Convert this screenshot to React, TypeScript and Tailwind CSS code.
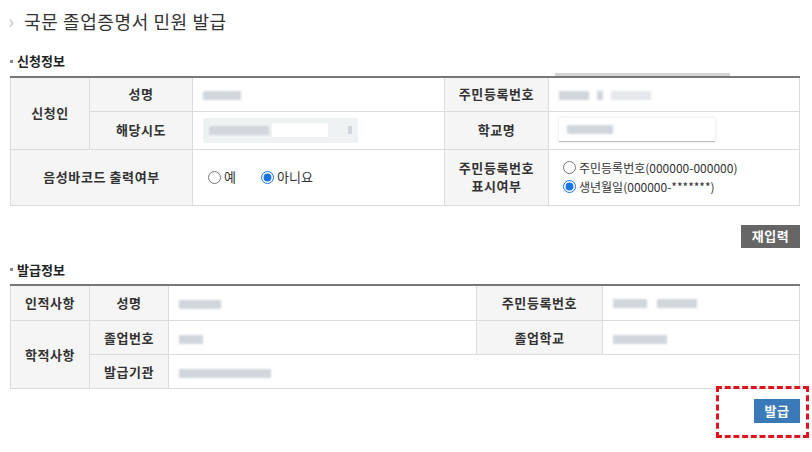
import React from "react";

const font = { fontFamily: '"Noto Sans CJK KR", "Noto Sans", sans-serif' };

function Blur({ w, tone = "bg-gray-300" }: { w: number; tone?: string }) {
  return <span className={`inline-block h-[9px] ${tone} blur-[1.2px] align-middle`} style={{ width: w }} />;
}

function Th({ children, className = "", ...rest }: React.ThHTMLAttributes<HTMLTableCellElement>) {
  return (
    <th
      {...rest}
      className={`border border-[#dcdcdc] bg-[#f5f5f5] p-0 text-center text-[13px] font-bold leading-[18px] tracking-[0.6px] text-[#333] ${className}`}
    >
      {children}
    </th>
  );
}

function Td({ children, className = "", ...rest }: React.TdHTMLAttributes<HTMLTableCellElement>) {
  return (
    <td {...rest} className={`border border-[#dcdcdc] bg-white px-[10px] py-0 text-[13px] text-[#333] ${className}`}>
      {children}
    </td>
  );
}

function Radio({ checked, name, label }: { checked?: boolean; name: string; label: string }) {
  return (
    <label className="inline-flex items-center gap-[3px] text-[#333]">
      <input type="radio" name={name} defaultChecked={checked} className="m-0 h-[13px] w-[13px] accent-[#1a73e8]" />
      <span>{label}</span>
    </label>
  );
}

function SectionLabel({ children }: { children: React.ReactNode }) {
  return (
    <div className="flex h-[16px] items-center gap-[4px] pl-[10px] text-[13px] font-bold text-[#222]">
      <span className="h-[3px] w-[3px] bg-[#888]" />
      <span>{children}</span>
    </div>
  );
}

export default function App() {
  return (
    <div className="h-[452px] w-[812px] bg-white" style={font}>
      {/* Title */}
      <div className="flex h-[42px] items-center pl-[8px]">
        <span className="text-[20px] leading-none text-[#c8c8c8]">›</span>
        <span className="ml-[10px] text-[18px] tracking-[0.6px] text-[#333]">국문 졸업증명서 민원 발급</span>
      </div>

      {/* 신청정보 */}
      <div className="mt-[11px]">
        <SectionLabel>신청정보</SectionLabel>
      </div>
      <div className="relative mt-[7px] px-[10px]">
        <div className="absolute left-[555px] top-[-3px] h-[3px] w-[175px] bg-[#d4d4d4] blur-[0.5px]" />
        <table className="w-[789px] table-fixed border-collapse border-t-2 border-t-[#777]">
          <colgroup>
            <col className="w-[79px]" />
            <col className="w-[103px]" />
            <col className="w-[252px]" />
            <col className="w-[104px]" />
            <col className="w-[251px]" />
          </colgroup>
          <tbody>
            <tr className="h-[34px]">
              <Th rowSpan={2}>신청인</Th>
              <Th>성명</Th>
              <Td>
                <Blur w={38} />
              </Td>
              <Th>주민등록번호</Th>
              <Td>
                <span className="inline-flex items-center gap-[8px]">
                  <Blur w={30} />
                  <Blur w={6} />
                  <Blur w={40} tone="bg-gray-200" />
                </span>
              </Td>
            </tr>
            <tr className="h-[38px]">
              <Th>해당시도</Th>
              <Td className="px-[6px]">
                <div className="flex h-[25px] w-[155px] items-center justify-between rounded-[2px] bg-[#eef2f3] px-[6px] blur-[0.6px]">
                  <span className="inline-flex items-center gap-[3px]">
                    <Blur w={60} tone="bg-gray-300" />
                    <span className="h-[14px] w-[56px] bg-white" />
                  </span>
                  <span className="h-[8px] w-[4px] bg-gray-300" />
                </div>
              </Td>
              <Th>학교명</Th>
              <Td className="px-[8px]">
                <div className="flex h-[24px] w-[156px] items-center border-b border-[#bbb] bg-white px-[8px] shadow-[0_0_3px_rgba(0,0,0,0.12)]">
                  <Blur w={46} />
                </div>
              </Td>
            </tr>
            <tr className="h-[56px]">
              <Th colSpan={2}>음성바코드 출력여부</Th>
              <Td className="px-[15px]">
                <div className="flex items-center gap-[25px]">
                  <Radio name="voice" label="예" />
                  <Radio name="voice" label="아니요" checked />
                </div>
              </Td>
              <Th>
                주민등록번호
                <br />
                표시여부
              </Th>
              <Td className="px-[14px]">
                <div className="flex flex-col gap-[2px] text-[12px] leading-[17px]">
                  <Radio name="rrn" label="주민등록번호(000000-000000)" />
                  <Radio name="rrn" label="생년월일(000000-*******)" checked />
                </div>
              </Td>
            </tr>
          </tbody>
        </table>
      </div>

      <div className="mt-[19px] flex justify-end pr-[12px]">
        <button className="h-[23px] w-[59px] bg-[#666] text-[13px] font-bold tracking-[0.5px] text-white">재입력</button>
      </div>

      {/* 발급정보 */}
      <div className="mt-[14px]">
        <SectionLabel>발급정보</SectionLabel>
      </div>
      <div className="mt-[6px] px-[10px]">
        <table className="w-[789px] table-fixed border-collapse border-t-2 border-t-[#777]">
          <colgroup>
            <col className="w-[79px]" />
            <col className="w-[79px]" />
            <col className="w-[308px]" />
            <col className="w-[126px]" />
            <col className="w-[197px]" />
          </colgroup>
          <tbody>
            <tr className="h-[36px]">
              <Th>인적사항</Th>
              <Th>성명</Th>
              <Td>
                <Blur w={42} />
              </Td>
              <Th>주민등록번호</Th>
              <Td>
                <span className="inline-flex items-center gap-[10px]">
                  <Blur w={34} />
                  <Blur w={40} />
                </span>
              </Td>
            </tr>
            <tr className="h-[34px]">
              <Th rowSpan={2}>학적사항</Th>
              <Th>졸업번호</Th>
              <Td>
                <Blur w={24} />
              </Td>
              <Th>졸업학교</Th>
              <Td>
                <Blur w={54} />
              </Td>
            </tr>
            <tr className="h-[34px]">
              <Th>발급기관</Th>
              <Td colSpan={3}>
                <Blur w={92} />
              </Td>
            </tr>
          </tbody>
        </table>
      </div>

      <div className="flex justify-end pr-[12px]">
        <div className="relative mt-[10px] flex">
          <div className="pointer-events-none absolute left-[-38px] top-[-13px] h-[52px] w-[93px] border-[3px] border-dashed border-[#e0141e]" />
          <button className="h-[24px] w-[46px] bg-[#3a7ab8] text-[13px] font-bold tracking-[0.5px] text-white">발급</button>
        </div>
      </div>
    </div>
  );
}
